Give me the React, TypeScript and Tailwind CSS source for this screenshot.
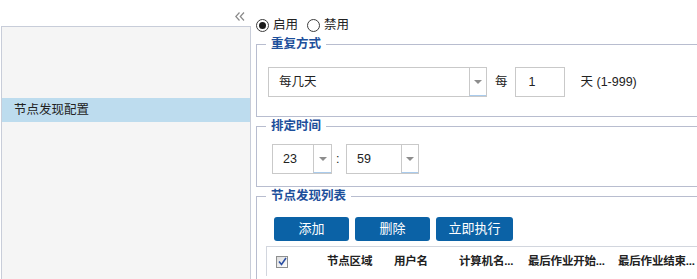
import type { ReactNode } from "react";

function Caret() {
  return <span className="h-0 w-0 border-x-[4px] border-t-[4px] border-x-transparent border-t-[#8d8d8d]" />;
}

function Select({ value, width, arrow }: { value: string; width: string; arrow: string }) {
  return (
    <div className={`flex h-[30px] border border-[#c9c9c9] bg-white ${width}`}>
      <div className="flex-1 pl-[10px] leading-[28px]">{value}</div>
      <div className={`flex items-center justify-center border-l border-b border-l-[#c9c9c9] border-b-[#a9cbec] ${arrow}`}>
        <Caret />
      </div>
    </div>
  );
}

function Radio({ checked, label }: { checked?: boolean; label: string }) {
  return (
    <label className="flex items-center gap-[4px]">
      <span className="flex h-[13px] w-[13px] items-center justify-center rounded-full border border-[#3c3c3c] bg-white">
        {checked && <span className="h-[7px] w-[7px] rounded-full bg-[#1a1a1a]" />}
      </span>
      <span className="leading-[13px]">{label}</span>
    </label>
  );
}

function Group({ title, children, className = "" }: { title: string; children: ReactNode; className?: string }) {
  return (
    <fieldset className={`border border-[#b8bdcf] pl-[11px] ${className}`}>
      <legend className="ml-[-2px] px-[5px] font-bold leading-[18px] text-[#1d4f9b]">{title}</legend>
      {children}
    </fieldset>
  );
}

const buttons = [
  { label: "添加", w: "w-[75px]" },
  { label: "删除", w: "w-[75px]" },
  { label: "立即执行", w: "w-[77px]" },
];

const columns = [
  { label: "节点区域", w: "w-[67px]" },
  { label: "用户名", w: "w-[65px]" },
  { label: "计算机名...", w: "w-[69px]" },
  { label: "最后作业开始...", w: "w-[90px]" },
  { label: "最后作业结束...", w: "w-[80px]" },
];

export default function App() {
  return (
    <div className="flex h-[279px] w-[697px] overflow-hidden bg-white font-['Liberation_Sans','Noto_Sans_CJK_SC',sans-serif] text-[12.5px] text-[#222]">
      <aside className="flex w-[251px] flex-none flex-col">
        <div className="flex h-[26px] justify-end pr-[6px] pt-[12px]">
          <svg width="10" height="9" viewBox="0 0 10 9" fill="none" stroke="#8a8a8a" strokeWidth="1.2">
            <path d="M4.5 0.5 L0.8 4.5 L4.5 8.5" />
            <path d="M9 0.5 L5.3 4.5 L9 8.5" />
          </svg>
        </div>
        <div className="ml-[1px] flex-1 border border-b-0 border-[#c8cdd9] bg-[#f5f5f5]">
          <div className="mt-[71px] h-[24px] bg-[#bddcee] pl-[12px] leading-[24px]">节点发现配置</div>
        </div>
      </aside>

      <main className="ml-[5px] w-[620px] flex-none">
        <div className="flex h-[35px] items-start gap-[9px] pt-[19px]">
          <Radio checked label="启用" />
          <Radio label="禁用" />
        </div>

        <Group title="重复方式" className="pb-[19px]">
          <div className="mt-[14px] flex items-center">
            <Select value="每几天" width="w-[219px]" arrow="w-[17px]" />
            <span className="ml-[8px]">每</span>
            <div className="ml-[7px] h-[30px] w-[50px] border border-[#c9c9c9] pl-[13px] leading-[28px]">1</div>
            <span className="ml-[16px]">天 (1-999)</span>
          </div>
        </Group>

        <Group title="排定时间" className="pb-[12px]">
          <div className="ml-[4px] mt-[9px] flex items-center">
            <Select value="23" width="w-[60px]" arrow="w-[18px]" />
            <span className="w-[14px] pl-[4px]">:</span>
            <Select value="59" width="w-[73px]" arrow="w-[17px]" />
          </div>
        </Group>

        <Group title="节点发现列表" className="pb-[40px]">
          <div className="ml-[6px] mt-[12px] flex gap-[6px]">
            {buttons.map((b) => (
              <button
                key={b.label}
                className={`h-[24px] rounded-[3px] bg-[#0b62a6] text-[13px] leading-[24px] text-white ${b.w}`}
              >
                {b.label}
              </button>
            ))}
          </div>
          <div className="ml-[-2px] mt-[5px] flex h-[30px] items-center border-l border-t border-[#d2d6de] text-[11.5px] font-bold">
            <div className="w-[60px] pl-[9px]">
              <span className="flex h-[12px] w-[12px] items-center justify-center border border-[#8e8f8f] bg-gradient-to-br from-[#dcdcdc] to-white">
                <svg width="9" height="9" viewBox="0 0 9 9" fill="none" stroke="#2b4fa3" strokeWidth="1.6">
                  <path d="M1 4.5 L3.5 7.5 L8 1" />
                </svg>
              </span>
            </div>
            {columns.map((c) => (
              <div key={c.label} className={`whitespace-nowrap tracking-[-0.2px] ${c.w}`}>
                {c.label}
              </div>
            ))}
          </div>
        </Group>
      </main>
    </div>
  );
}
